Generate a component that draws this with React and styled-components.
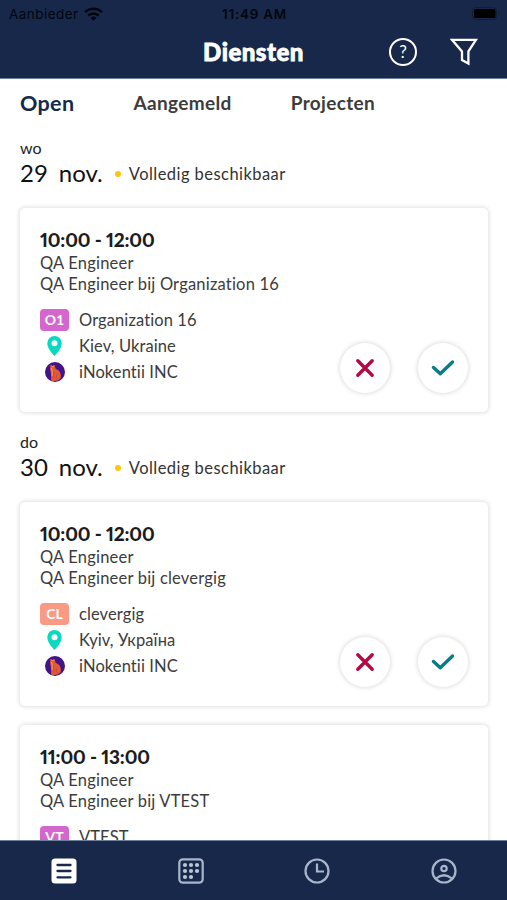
import React from "react";
import styled, { createGlobalStyle } from "styled-components";

const days = [
  {
    weekday: "wo",
    day: "29",
    month: "nov.",
    shifts: [
      {
        time: "10:00 - 12:00",
        job: "QA Engineer",
        detail: "QA Engineer bij Organization 16",
        code: "O1",
        color: "#d566cd",
        organization: "Organization 16",
        location: "Kiev, Ukraine",
        company: "iNokentii INC",
      },
    ],
  },
  {
    weekday: "do",
    day: "30",
    month: "nov.",
    shifts: [
      {
        time: "10:00 - 12:00",
        job: "QA Engineer",
        detail: "QA Engineer bij clevergig",
        code: "CL",
        color: "#fb9a84",
        organization: "clevergig",
        location: "Kyiv, Україна",
        company: "iNokentii INC",
      },
      {
        time: "11:00 - 13:00",
        job: "QA Engineer",
        detail: "QA Engineer bij VTEST",
        code: "VT",
        color: "#d566cd",
        organization: "VTEST",
      },
    ],
  },
];

const WifiIcon = () => (
  <svg width="19" height="14" viewBox="0 0 19 14">
    <g fill="none" stroke="#03060c" strokeWidth="2.5">
      <path d="M1 5.2a12 12 0 0 1 17 0" />
      <path d="M4.2 8.6a7.5 7.5 0 0 1 10.6 0" />
    </g>
    <path d="M6.6 11a4.1 4.1 0 0 1 5.8 0L9.5 13.8z" fill="#03060c" />
  </svg>
);

const BatteryIcon = () => (
  <svg width="28" height="13" viewBox="0 0 28 13">
    <rect x="0.5" y="0.5" width="24" height="12" rx="3" fill="none" stroke="#111c35" />
    <rect x="2" y="2" width="21.5" height="9" rx="1.5" fill="#000" />
    <path d="M26 4.5q1.6 2 0 4z" fill="#111c35" />
  </svg>
);

const FilterIcon = () => (
  <svg width="28" height="28" viewBox="0 0 28 28">
    <path
      d="M2 1.800h24l-7.600 11.600v12.200l-6.400-3.600v-8.600z"
      fill="none"
      stroke="#fff"
      strokeWidth="2.3"
      strokeLinejoin="miter"
    />
  </svg>
);

const PinIcon = () => (
  <svg width="15" height="20" viewBox="0 0 15 20">
    <path
      fillRule="evenodd"
      d="M7.5 0A7.2 7.2 0 0 0 .3 7.2C.3 12 4.4 16.5 7.5 20c3.1-3.5 7.2-8 7.2-12.8A7.2 7.2 0 0 0 7.5 0zm0 4.2a3 3 0 1 1 0 6 3 3 0 0 1 0-6z"
      fill="#0ad9c2"
    />
  </svg>
);

const CatAvatar = () => (
  <svg width="20" height="20" viewBox="0 0 20 20">
    <circle cx="10" cy="10" r="10" fill="#43138a" />
    <path
      d="M5.500 3l1.600 1 2.600-.8.8 3.300c.3 1 3 1 4.200 3.200 1.300 2.600 1.300 4.500.8 6.800A9.500 9.500 0 0 1 6 18.500c.5-3.600-.2-6-.1-8C5.200 9 5 5.500 5.500 3z"
      fill="#e25a35"
    />
    <path d="M8.400 9.5l.6 7M12.5 12c-1.600 1.5-1.500 3.300 0 5" fill="none" stroke="#c44a3a" />
    <path d="M5.900 3.600l1.300 1.200 2-.9M6.300 6l.9 3v5" fill="none" stroke="#f9a04a" />
  </svg>
);

const CrossIcon = () => (
  <svg width="20" height="20" viewBox="0 0 20 20">
    <path d="M2.8 2.8l14.4 14.4M17.2 2.8L2.8 17.2" stroke="#b40a43" strokeWidth="3.4" strokeLinecap="round" />
  </svg>
);

const CheckIcon = () => (
  <svg width="24" height="18" viewBox="0 0 24 18">
    <path
      d="M2.5 8.5l6.8 6.3L21.5 3"
      fill="none"
      stroke="#087c88"
      strokeWidth="3.4"
      strokeLinecap="round"
      strokeLinejoin="round"
    />
  </svg>
);

const ListIcon = () => (
  <svg width="26" height="26" viewBox="0 0 26 26">
    <rect x="0.5" y="0.5" width="25" height="25" rx="3.5" fill="#fff" />
    <path d="M6.500 7h13M6.500 13h13M6.500 19.300h13" stroke="#18284a" strokeWidth="2.3" strokeLinecap="round" />
  </svg>
);

const CalendarIcon = () => (
  <svg width="26" height="26" viewBox="0 0 26 26">
    <rect x="1.3" y="1.3" width="23.4" height="23.4" rx="3.5" fill="none" stroke="#a9b6ca" strokeWidth="2.200" />
    <g fill="#bcc6d6">
      {[7, 13, 19].map((y) =>
        [7, 13, 19]
          .filter((x) => x + y < 38)
          .map((x) => <circle key={`${x}-${y}`} cx={x} cy={y} r="2.100" />)
      )}
    </g>
  </svg>
);

const ClockIcon = () => (
  <svg width="26" height="26" viewBox="0 0 26 26">
    <g fill="none" stroke="#a9b6ca" strokeWidth="2.2">
      <circle cx="13" cy="13" r="11.5" />
      <path d="M13 5.5v8h7" />
    </g>
  </svg>
);

const ProfileIcon = () => (
  <svg width="26" height="26" viewBox="0 0 26 26">
    <g fill="none" stroke="#a9b6ca" strokeWidth="2.2">
      <circle cx="13" cy="13" r="11.5" />
      <circle cx="13" cy="10.5" r="2.7" />
      <path d="M5 20.5q8-6.5 16 0" />
    </g>
  </svg>
);

const ShiftCard = ({ shift }) => (
  <Card>
    <Time>{shift.time}</Time>
    <Job>{shift.job}</Job>
    <Job>{shift.detail}</Job>
    <CardBottom>
      <div>
        <InfoRow>
          <Badge $color={shift.color}>{shift.code}</Badge>
          <span>{shift.organization}</span>
        </InfoRow>
        {shift.location && (
          <InfoRow>
            <PinIcon />
            <span>{shift.location}</span>
          </InfoRow>
        )}
        {shift.company && (
          <InfoRow>
            <CatAvatar />
            <span>{shift.company}</span>
          </InfoRow>
        )}
      </div>
      {shift.company && (
        <Actions>
          <RoundButton>
            <CrossIcon />
          </RoundButton>
          <RoundButton>
            <CheckIcon />
          </RoundButton>
        </Actions>
      )}
    </CardBottom>
  </Card>
);

const App = () => {
  return (
    <Screen>
      <GlobalStyle />
      <Header>
        <StatusBar>
          <Carrier>
            <span>Aanbieder</span>
            <WifiIcon />
          </Carrier>
          <Clock>11:49 AM</Clock>
          <BatteryIcon />
        </StatusBar>
        <TitleBar>
          <Title>Diensten</Title>
          <HeaderActions>
            <HelpButton>?</HelpButton>
            <FilterIcon />
          </HeaderActions>
        </TitleBar>
      </Header>
      <Tabs>
        <Tab $active>Open</Tab>
        <Tab>Aangemeld</Tab>
        <Tab>Projecten</Tab>
      </Tabs>
      <List>
        {days.map((item) => (
          <section key={item.day}>
            <Weekday>{item.weekday}</Weekday>
            <DateRow>
              <DateText>
                <span>{item.day}</span>
                <span>{item.month}</span>
              </DateText>
              <Dot />
              <Availability>Volledig beschikbaar</Availability>
            </DateRow>
            <Cards>
              {item.shifts.map((shift) => (
                <ShiftCard key={shift.detail} shift={shift} />
              ))}
            </Cards>
          </section>
        ))}
      </List>
      <BottomNav>
        <ListIcon />
        <CalendarIcon />
        <ClockIcon />
        <ProfileIcon />
      </BottomNav>
    </Screen>
  );
};

export default App;

const GlobalStyle = createGlobalStyle`
  * {
    box-sizing: border-box;
  }

  body {
    margin: 0;
    background-color: #fff;
    font-family: Lato, "Open Sans", sans-serif;
    font-variant-ligatures: none;
    color: #3c3c3c;
  }

  svg {
    display: block;
    flex-shrink: 0;
  }
`;

const Screen = styled.div`
  display: flex;
  flex-direction: column;
  height: 100vh;
  overflow: hidden;
`;

const Header = styled.header`
  flex-shrink: 0;
  height: 79px;
  background-color: #18284a;
  border-bottom: 1px solid #6c7f9b;
`;

const StatusBar = styled.div`
  display: grid;
  grid-template-columns: 1fr auto 1fr;
  align-items: center;
  height: 27px;
  padding: 0 7px 0 9px;
  font-family: Inter, sans-serif;
  font-size: 13.5px;
  color: #03060c;

  > svg {
    justify-self: end;
  }
`;

const Carrier = styled.div`
  display: flex;
  align-items: center;
  gap: 5px;
  letter-spacing: 0.45px;
`;

const Clock = styled.div`
  font-weight: 600;
  letter-spacing: 0.75px;
`;

const TitleBar = styled.div`
  display: grid;
  grid-template-columns: 1fr auto 1fr;
  align-items: center;
  height: 50px;
  padding: 0 29px 0 0;
`;

const Title = styled.h1`
  grid-column: 2;
  margin: 0 0 2px 29px;
  font-size: 24px;
  font-weight: 900;
  letter-spacing: 0.5px;
  color: #fff;
  -webkit-text-stroke: 0.8px #fff;
`;

const HeaderActions = styled.div`
  display: flex;
  align-items: center;
  justify-content: flex-end;
  gap: 33px;
`;

const HelpButton = styled.div`
  display: flex;
  align-items: center;
  justify-content: center;
  width: 28px;
  height: 28px;
  border: 2px solid #fff;
  border-radius: 50%;
  color: #fff;
  font-size: 17px;
  line-height: 20px;
`;

const Tabs = styled.nav`
  display: flex;
  flex-shrink: 0;
  align-items: center;
  gap: 59px;
  height: 47px;
  margin-bottom: 3px;
  padding-left: 20px;
`;

const Tab = styled.div`
  font-size: ${({ $active }) => ($active ? "21.5px" : "19px")};
  font-weight: 700;
  letter-spacing: 0.35px;
  color: ${({ $active }) => ($active ? "#18284a" : "#3c3c3c")};
`;

const List = styled.main`
  flex: 1;
  min-height: 0;
  overflow: hidden;
  padding: 8px 19px 0 20px;
`;

const Weekday = styled.div`
  height: 21px;
  line-height: 21px;
  font-size: 16px;
  color: #222;
`;

const DateRow = styled.div`
  display: flex;
  align-items: center;
  height: 29px;
`;

const DateText = styled.div`
  display: flex;
  gap: 11px;
  font-size: 24px;
  color: #111;
`;

const Dot = styled.span`
  width: 6px;
  height: 6px;
  margin: 3px 8px 0 12px;
  border-radius: 50%;
  background-color: #fdc50c;
`;

const Availability = styled.span`
  padding-top: 2px;
  font-size: 16.5px;
  letter-spacing: 0.45px;
  color: #333;
`;

const Cards = styled.div`
  display: flex;
  flex-direction: column;
  gap: 19px;
  padding: 21px 0 19px;
`;

const Card = styled.article`
  height: 204px;
  padding: 20px 20px 19px;
  border-radius: 5px;
  background-color: #fff;
  box-shadow: 0 0 4px 1px rgba(0, 0, 0, 0.13);
`;

const Time = styled.div`
  height: 25px;
  line-height: 24px;
  font-size: 19px;
  font-weight: 900;
  font-variant-numeric: proportional-nums;
  letter-spacing: -0.15px;
  color: #1c1c1c;
`;

const Job = styled.div`
  height: 21px;
  line-height: 21px;
  font-size: 16.5px;
  letter-spacing: 0.2px;
`;

const CardBottom = styled.div`
  display: flex;
  align-items: flex-end;
  justify-content: space-between;
  padding-top: 12px;

  > div:first-child {
    padding-bottom: 8px;
  }
`;

const InfoRow = styled.div`
  display: grid;
  grid-template-columns: 29px auto;
  column-gap: 10px;
  align-items: center;
  justify-items: center;
  height: 26px;
  font-size: 16.5px;
  letter-spacing: 0.1px;

  > span:last-child {
    justify-self: start;
  }
`;

const Badge = styled.span`
  width: 29px;
  height: 22px;
  border-radius: 4px;
  background-color: ${({ $color }) => $color};
  color: #fff;
  font-size: 14px;
  font-weight: 700;
  line-height: 21px;
  text-align: center;
`;

const Actions = styled.div`
  display: flex;
  gap: 28px;
`;

const RoundButton = styled.button`
  display: flex;
  align-items: center;
  justify-content: center;
  width: 50px;
  height: 50px;
  padding: 0;
  border: none;
  border-radius: 50%;
  background-color: #fff;
  box-shadow: 0 0 4px 1px rgba(0, 0, 0, 0.13);
`;

const BottomNav = styled.footer`
  display: grid;
  grid-template-columns: repeat(4, 1fr);
  flex-shrink: 0;
  align-items: center;
  justify-items: center;
  height: 60px;
  padding-left: 1px;
  border-top: 1px solid #6c7f9b;
  background-color: #18284a;
`;
